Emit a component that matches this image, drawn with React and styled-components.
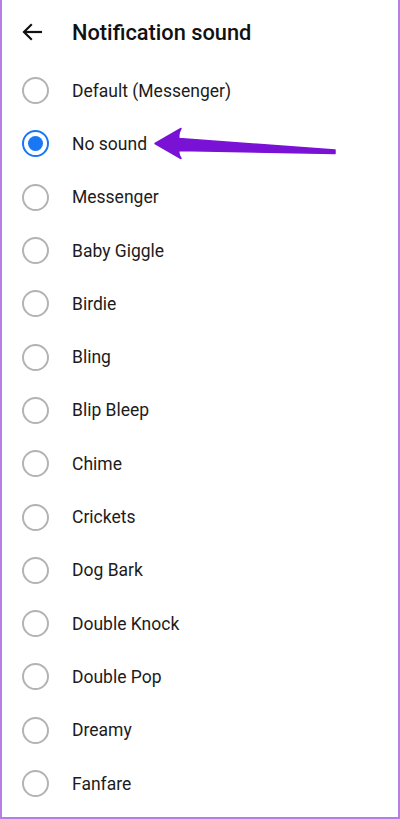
import React from 'react'
import styled, { createGlobalStyle } from 'styled-components'

const GlobalStyle = createGlobalStyle`
  html, body { margin: 0; padding: 0; background: #fff; }
  body { font-family: Roboto, "Noto Sans", sans-serif; }
`;

const Screen = styled.div`
  position: relative;
  width: 400px;
  height: 819px;
  box-sizing: border-box;
  border: 2px solid #b47ee4;
  border-top: none;
  background: #fff;
  overflow: hidden;
`;

const Header = styled.div`
  display: flex;
  align-items: center;
  height: 64px;
  padding-left: 19px;
`;

const BackButton = styled.div`
  width: 22px;
  height: 22px;
  display: flex;
  align-items: center;
  justify-content: center;
  margin-right: 29px;
`;

const Title = styled.h1`
  margin: 0;
  font-size: 21.8px;
  font-weight: 500;
  color: #111;
`;

const List = styled.div`
  display: flex;
  flex-direction: column;
`;

const Row = styled.div`
  display: flex;
  align-items: center;
  height: 53.3px;
  padding-left: 20px;
`;

const Radio = styled.span`
  box-sizing: border-box;
  width: 27px;
  height: 27px;
  border-radius: 50%;
  border: 2px solid ${p => (p.checked ? '#1877f2' : '#b3b3b3')};
  display: flex;
  align-items: center;
  justify-content: center;
  margin-right: 23px;
  &::after {
    content: '';
    display: ${p => (p.checked ? 'block' : 'none')};
    width: 15px;
    height: 15px;
    border-radius: 50%;
    background: #1877f2;
  }
`;

const Label = styled.span`
  font-size: 17.5px;
  color: #1c1c1c;
`;

const Pointer = styled.svg`
  position: absolute;
  left: 0;
  top: 0;
  pointer-events: none;
`;

const sounds = [
  'Default (Messenger)',
  'No sound',
  'Messenger',
  'Baby Giggle',
  'Birdie',
  'Bling',
  'Blip Bleep',
  'Chime',
  'Crickets',
  'Dog Bark',
  'Double Knock',
  'Double Pop',
  'Dreamy',
  'Fanfare',
];

export default function App() {
  const selected = 'No sound';
  return (
    <Screen>
      <GlobalStyle />
      <Header>
        <BackButton>
          <svg width="20" height="18" viewBox="0 0 20 18" fill="none" stroke="#111" strokeWidth="2.2" strokeLinecap="square">
            <path d="M19 9H3" />
            <path d="M9 2L2 9l7 7" />
          </svg>
        </BackButton>
        <Title>Notification sound</Title>
      </Header>
      <List>
        {sounds.map(name => (
          <Row key={name}>
            <Radio checked={name === selected} />
            <Label>{name}</Label>
          </Row>
        ))}
      </List>
      <Pointer width="400" height="200" viewBox="0 0 400 200">
        <path
          d="M153 143.5 L179 128.5 Q176 134 177 138.5 L333 150 L333 153.5 L177 150.5 Q176 154 179 158.5 Z"
          fill="#7a12d6"
          stroke="#7a12d6"
          strokeWidth="1.5"
          strokeLinejoin="round"
        />
      </Pointer>
    </Screen>
  );
}
